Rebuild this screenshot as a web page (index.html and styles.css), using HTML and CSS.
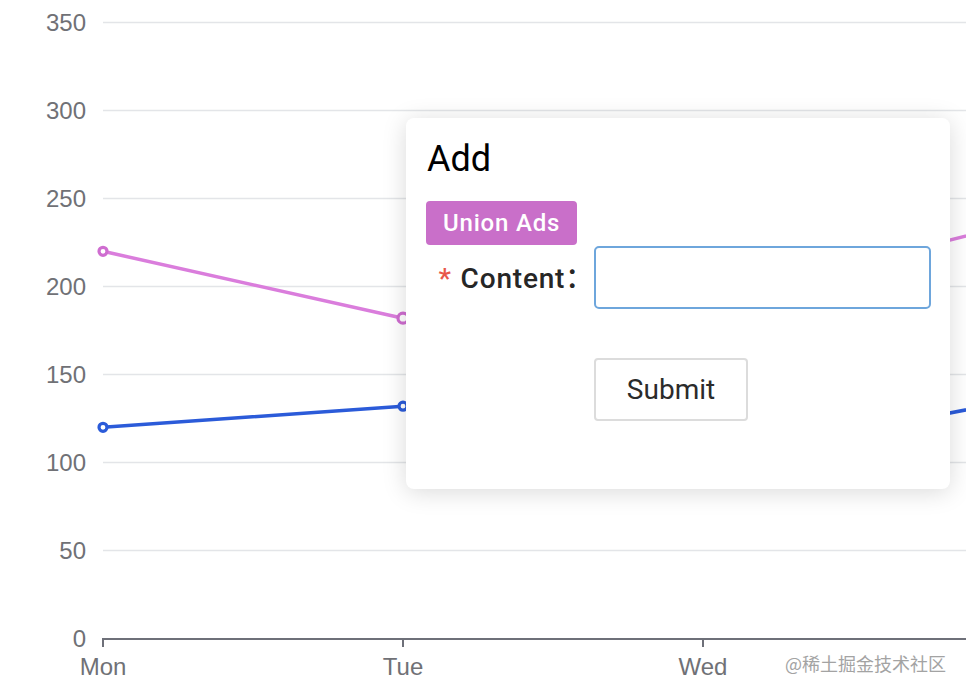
FILE: index.html
```html
<!DOCTYPE html>
<html lang="en">
<head>
<meta charset="utf-8">
<title>Chart with Add dialog</title>
<link rel="stylesheet" href="styles.css">
</head>
<body>
<div class="stage">
  <svg class="chart" width="966" height="694" viewBox="0 0 966 694" xmlns="http://www.w3.org/2000/svg">
    <g class="grid">
      <line x1="103" y1="22.5" x2="966" y2="22.5"/>
      <line x1="103" y1="110.5" x2="966" y2="110.5"/>
      <line x1="103" y1="198.5" x2="966" y2="198.5"/>
      <line x1="103" y1="286.5" x2="966" y2="286.5"/>
      <line x1="103" y1="374.5" x2="966" y2="374.5"/>
      <line x1="103" y1="462.5" x2="966" y2="462.5"/>
      <line x1="103" y1="550.5" x2="966" y2="550.5"/>
    </g>
    <g class="ylabels">
      <text x="86" y="31">350</text>
      <text x="86" y="119">300</text>
      <text x="86" y="207">250</text>
      <text x="86" y="295">200</text>
      <text x="86" y="383">150</text>
      <text x="86" y="471">100</text>
      <text x="86" y="559">50</text>
      <text x="86" y="647">0</text>
    </g>
    <g class="axis">
      <line x1="103" y1="639" x2="966" y2="639"/>
      <line x1="103" y1="638" x2="103" y2="647"/>
      <line x1="403" y1="638" x2="403" y2="647"/>
      <line x1="703" y1="638" x2="703" y2="647"/>
    </g>
    <g class="xlabels">
      <text x="103" y="675">Mon</text>
      <text x="403" y="675">Tue</text>
      <text x="703" y="675">Wed</text>
    </g>
    <polyline class="series-blue" points="103,427.3 403,406.2 703,460.7 1003,402.7"/>
    <polyline class="series-pink" points="103,251.3 403,318.2 703,302.3 1003,226.7"/>
    <g class="marker-blue">
      <circle cx="103" cy="427.3" r="4"/>
      <circle cx="403" cy="406.2" r="4"/>
      <circle cx="703" cy="460.7" r="4"/>
    </g>
    <g class="marker-pink">
      <circle cx="103" cy="251.3" r="4"/>
      <circle cx="403" cy="318.2" r="5"/>
      <circle cx="703" cy="302.3" r="4"/>
    </g>
  </svg>

  <div class="dialog">
    <h2 class="dialog-title">Add</h2>
    <div class="tag-row"><span class="tag">Union Ads</span></div>
    <div class="form-row">
      <label class="form-label" for="content"><span class="required">*</span>Content：</label>
      <input class="form-input" id="content" type="text">
    </div>
    <div class="form-actions">
      <button class="btn-submit" type="button">Submit</button>
    </div>
  </div>

  <div class="watermark">@稀土掘金技术社区</div>
</div>
</body>
</html>
```

FILE: styles.css
```css
html, body {
  margin: 0;
  padding: 0;
  background: #ffffff;
}

.stage {
  position: relative;
  width: 966px;
  height: 694px;
  overflow: hidden;
  font-family: "Liberation Sans", "Noto Sans CJK SC", sans-serif;
}

.chart {
  display: block;
}

.grid line {
  stroke: #e3e5e8;
  stroke-width: 1.6;
}

.axis line {
  stroke: #6e7079;
  stroke-width: 2;
}

.ylabels text {
  fill: #707176;
  font-family: "Liberation Sans", sans-serif;
  font-size: 24px;
  text-anchor: end;
}

.xlabels text {
  fill: #707176;
  font-family: "Liberation Sans", sans-serif;
  font-size: 24px;
  text-anchor: middle;
}

.series-blue {
  fill: none;
  stroke: #2b5bd9;
  stroke-width: 3.5;
  stroke-linejoin: round;
}

.series-pink {
  fill: none;
  stroke: #da7ddc;
  stroke-width: 3.5;
  stroke-linejoin: round;
}

.marker-blue circle {
  fill: #ffffff;
  stroke: #2b5bd9;
  stroke-width: 3.2;
}

.marker-pink circle {
  fill: #ffffff;
  stroke: #cf6dd0;
  stroke-width: 3.2;
}

.dialog {
  position: absolute;
  left: 406px;
  top: 118px;
  width: 544px;
  height: 371px;
  box-sizing: border-box;
  padding: 20px;
  background: #ffffff;
  border-radius: 8px;
  box-shadow: 0 3px 24px rgba(0, 0, 0, 0.15);
}

.dialog-title {
  margin: 0;
  font-family: Roboto, "Liberation Sans", sans-serif;
  font-weight: 400;
  font-size: 36px;
  line-height: 43px;
  color: #000000;
  padding-left: 1px;
}

.tag-row {
  margin-top: 20px;
  height: 44px;
}

.tag {
  display: inline-block;
  height: 44px;
  line-height: 44px;
  padding: 0 17px;
  background: #c96fc9;
  color: #ffffff;
  border-radius: 4px;
  font-family: Roboto, "Liberation Sans", sans-serif;
  font-weight: 500;
  font-size: 24px;
  letter-spacing: 0.8px;
}

.form-row {
  display: flex;
  align-items: center;
  margin-top: 1px;
}

.form-label {
  width: 168px;
  flex: 0 0 168px;
  margin-bottom: 4px;
  text-align: right;
  font-family: Roboto, "Noto Sans CJK SC", sans-serif;
  font-weight: 500;
  font-size: 28px;
  letter-spacing: 0.8px;
  color: #262626;
  white-space: nowrap;
}

.required {
  color: #e8574a;
  margin-right: 9px;
}

.form-input {
  width: 337px;
  height: 63px;
  box-sizing: border-box;
  border: 2px solid #6ea6dc;
  border-radius: 5px;
  outline: none;
  padding: 0 12px;
  background: #ffffff;
  font-family: Roboto, sans-serif;
  font-size: 24px;
}

.form-actions {
  margin-top: 49px;
  padding-left: 168px;
}

.btn-submit {
  width: 154px;
  height: 63px;
  box-sizing: border-box;
  border: 2px solid #dcdcdc;
  border-radius: 4px;
  background: #ffffff;
  color: #2b2b2b;
  font-family: Roboto, "Liberation Sans", sans-serif;
  font-weight: 400;
  font-size: 28px;
  padding: 0;
}

.watermark {
  position: absolute;
  left: 785px;
  top: 650px;
  font-family: "Noto Sans CJK SC", sans-serif;
  font-size: 18px;
  line-height: 26px;
  color: #a3a3a3;
  white-space: nowrap;
}
```
